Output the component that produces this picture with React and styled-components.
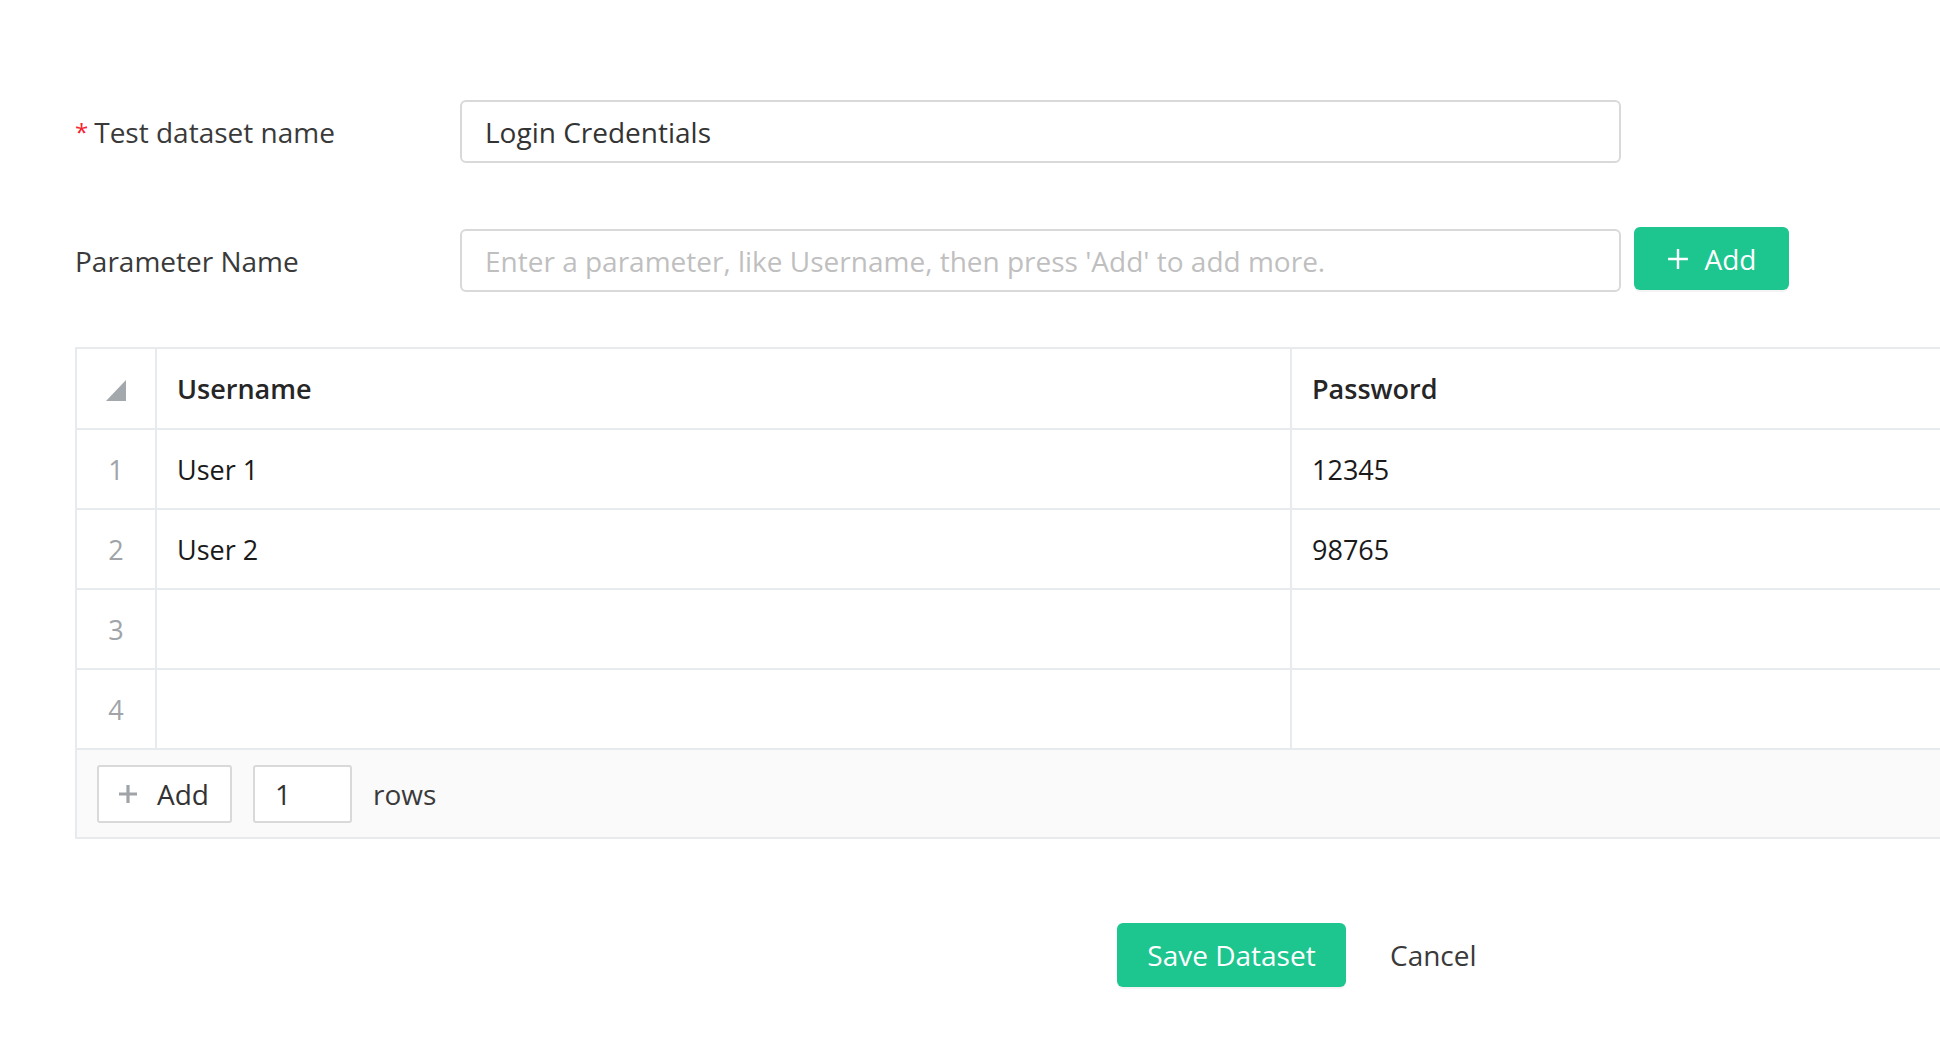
import React from 'react';
import styled, { createGlobalStyle } from 'styled-components';

const GlobalStyle = createGlobalStyle`
  html, body {
    margin: 0;
    background: #fff;
    overflow-x: hidden;
  }
  body {
    font-family: "Open Sans", "Noto Sans", sans-serif;
    color: #333;
  }
`;

const green = '#1dc58f';
const line = '#e8ebee';

const Page = styled.div`
  padding: 100px 0 60px 75px;
  width: 1900px;
`;

const FormRow = styled.div`
  display: flex;
  align-items: center;
  margin-bottom: ${({ gap }) => gap}px;
`;

const Label = styled.label`
  width: 385px;
  flex: none;
  font-size: 28px;
  color: #3a3a3a;
`;

const Required = styled.span`
  color: #f5222d;
  font-size: 24px;
  margin-right: 6px;
  vertical-align: 2px;
`;

const TextInput = styled.input`
  box-sizing: border-box;
  width: 1161px;
  height: 63px;
  padding: 0 23px;
  border: 2px solid #d9d9d9;
  border-radius: 6px;
  font-family: inherit;
  font-size: 28px;
  color: #333;
  outline: none;

  &::placeholder {
    color: #bfbfbf;
  }
`;

const PrimaryButton = styled.button`
  display: inline-flex;
  align-items: center;
  justify-content: center;
  gap: 16px;
  box-sizing: border-box;
  height: ${({ h }) => h}px;
  width: ${({ w }) => w}px;
  margin-left: ${({ ml }) => ml || 0}px;
  margin-top: ${({ mt }) => mt || 0}px;
  border: none;
  border-radius: 6px;
  background: ${green};
  color: #fff;
  font-family: inherit;
  font-size: 28px;
  box-shadow: 0 2px 0 rgba(0, 0, 0, 0.045);
  cursor: pointer;
`;

const Grid = styled.div`
  display: grid;
  grid-template-columns: 80px 1135px 1fr;
  border-top: 2px solid ${line};
  border-left: 2px solid ${line};
`;

const Cell = styled.div`
  box-sizing: border-box;
  height: ${({ first }) => (first ? 81 : 80)}px;
  display: flex;
  align-items: center;
  justify-content: ${({ center }) => (center ? 'center' : 'flex-start')};
  padding: ${({ center }) => (center ? '0' : '0 20px')};
  border-bottom: 2px solid ${line};
  border-right: ${({ last }) => (last ? 'none' : `2px solid ${line}`)};
  font-size: 27px;
  font-weight: ${({ head }) => (head ? 600 : 400)};
  color: ${({ muted, head }) => (muted ? '#a0a4a8' : head ? '#262626' : '#1a1a1a')};
`;

const Corner = styled.svg`
  width: 20px;
  height: 21px;
  margin-top: 4px;
`;

const Footer = styled.div`
  box-sizing: border-box;
  height: 89px;
  display: flex;
  align-items: center;
  gap: 21px;
  padding: 0 20px;
  background: #fafafa;
  border-left: 2px solid ${line};
  border-bottom: 2px solid ${line};
`;

const GhostButton = styled.button`
  box-sizing: border-box;
  display: inline-flex;
  align-items: center;
  gap: 19px;
  width: 135px;
  height: 58px;
  padding: 0 19px;
  background: #fff;
  border: 2px solid #d9d9d9;
  border-radius: 3px;
  font-family: inherit;
  font-size: 28px;
  color: #333;
`;

const CountInput = styled.input`
  box-sizing: border-box;
  width: 99px;
  height: 58px;
  padding: 0 20px;
  border: 2px solid #d9d9d9;
  border-radius: 3px;
  font-family: inherit;
  font-size: 28px;
  color: #333;
  outline: none;
`;

const FooterText = styled.span`
  font-size: 28px;
  color: #3a3a3a;
`;

const Actions = styled.div`
  display: flex;
  align-items: center;
  padding-left: 1042px;
  margin-top: 84px;
`;

const LinkButton = styled.button`
  margin-left: 44px;
  padding: 0;
  background: none;
  border: none;
  font-family: inherit;
  font-size: 28px;
  color: #3a3a3a;
`;

const Plus = ({ size, color, weight = 2.2 }) => (
  <svg width={size} height={size} viewBox="0 0 20 20">
    <path d="M10 1v18M1 10h18" stroke={color} strokeWidth={weight} />
  </svg>
);

const columns = ['Username', 'Password'];
const rows = [
  ['User 1', '12345'],
  ['User 2', '98765'],
  ['', ''],
  ['', ''],
];

export default function App() {
  return (
    <>
      <GlobalStyle />
      <Page>
        <FormRow gap={66}>
          <Label>
            <Required>*</Required>
            Test dataset name
          </Label>
          <TextInput defaultValue="Login Credentials" />
        </FormRow>

        <FormRow gap={55}>
          <Label>Parameter Name</Label>
          <TextInput placeholder="Enter a parameter, like Username, then press 'Add' to add more." />
          <PrimaryButton w={155} h={63} ml={13} mt={-4}>
            <Plus size={22} color="#fff" />
            Add
          </PrimaryButton>
        </FormRow>

        <Grid>
          <Cell first center>
            <Corner viewBox="0 0 20 21">
              <path d="M20 0V21H0Z" fill="#a3a8ad" />
            </Corner>
          </Cell>
          {columns.map((c, i) => (
            <Cell key={c} first head last={i === columns.length - 1}>
              {c}
            </Cell>
          ))}
          {rows.map((r, i) => (
            <React.Fragment key={i}>
              <Cell center muted>{i + 1}</Cell>
              {r.map((v, j) => (
                <Cell key={j} last={j === r.length - 1}>{v}</Cell>
              ))}
            </React.Fragment>
          ))}
        </Grid>
        <Footer>
          <GhostButton>
            <Plus size={20} color="#a0a4a8" weight={3.2} />
            Add
          </GhostButton>
          <CountInput defaultValue="1" />
          <FooterText>rows</FooterText>
        </Footer>

        <Actions>
          <PrimaryButton w={229} h={64}>Save Dataset</PrimaryButton>
          <LinkButton>Cancel</LinkButton>
        </Actions>
      </Page>
    </>
  );
}
